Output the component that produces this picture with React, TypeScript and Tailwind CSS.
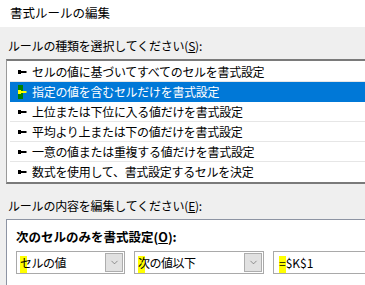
import { ChevronDown } from 'lucide-react';

const FONT = '"Noto Sans CJK JP", "Noto Sans", sans-serif';

const RULES = [
  'セルの値に基づいてすべてのセルを書式設定',
  '指定の値を含むセルだけを書式設定',
  '上位または下位に入る値だけを書式設定',
  '平均より上または下の値だけを書式設定',
  '一意の値または重複する値だけを書式設定',
  '数式を使用して、書式設定するセルを決定',
];

function RuleArrow({ selected }: { selected: boolean }) {
  const c = selected ? '#ffff00' : '#000000';
  return (
    <svg width="12" height="14" viewBox="0 0 12 14" className="flex-none">
      {selected && <rect x="2" y="0" width="5" height="14" fill="#008000" />}
      <rect x="2" y="5" width="3" height="4" fill={c} />
      <rect x="5" y="6" width="5" height="2" fill={c} />
      <rect x="10" y="6.5" width="1" height="1" fill={c} />
    </svg>
  );
}

function Marked({ first, rest }: { first: string; rest: string }) {
  return (
    <span className="whitespace-nowrap">
      <span className="relative inline-block">
        <span className="absolute left-0 top-[3px] w-[7px] h-[17px] bg-[#ffff00]" />
        <span className="relative">{first}</span>
      </span>
      {rest}
    </span>
  );
}

function Combo({ width, first, rest }: { width: string; first: string; rest: string }) {
  return (
    <div className={`${width} flex-none h-[23px] flex items-center border border-[#a9a9a9] bg-white pl-[3px] pr-[1px]`}>
      <div className="flex-1 text-[12px] tracking-[-0.5px] leading-[20px]">
        <Marked first={first} rest={rest} />
      </div>
      <div className="w-[18px] h-[19px] flex items-center justify-center bg-[#e1e1e1] border border-[#adadad]">
        <ChevronDown size={11} strokeWidth={1.3} color="#555555" />
      </div>
    </div>
  );
}

export default function App() {
  return (
    <div
      className="w-[365px] h-[285px] overflow-hidden bg-[#efefef] text-black flex flex-col"
      style={{ fontFamily: FONT }}
    >
      <div className="h-[27px] flex-none bg-white flex items-center pl-[10px] text-[12.5px] tracking-[0px]">
        書式ルールの編集
      </div>

      <div className="pl-[8px] pt-[12px] h-[32px] flex-none text-[12px] tracking-[-0.2px] leading-[14px]">
        ルールの種類を選択してください(<span className="underline">S</span>):
      </div>

      <div className="ml-[6px] w-[420px] flex-none bg-white border-y-2 border-l border-t-[#7a7a7a] border-b-[#7a7a7a] border-l-[#9a9a9a] pl-[3px] pt-[1px]">
        {RULES.map((r, i) => {
          const sel = i === 1;
          return (
            <div
              key={r}
              className={`h-[20px] flex items-center gap-[4px] pl-[6px] text-[12px] tracking-[-0.3px] whitespace-nowrap ${
                sel ? 'bg-[#0078d7] text-white' : i < 5 ? 'border-b border-[#e6e6e6]' : ''
              }`}
            >
              <RuleArrow selected={sel} />
              <span>{r}</span>
            </div>
          );
        })}
      </div>

      <div className="pl-[8px] pt-[15px] h-[35px] flex-none text-[12px] tracking-[-0.2px] leading-[14px]">
        ルールの内容を編集してください(<span className="underline">E</span>):
      </div>

      <div className="ml-[6px] w-[420px] flex-1 bg-white border-t border-l border-[#8d94a3] pl-[9px] pt-[9px]">
        <div className="text-[12.5px] font-bold tracking-[0px] leading-[16px]">
          次のセルのみを書式設定(<span className="underline">O</span>):
        </div>
        <div className="mt-[6px] flex gap-[9px]">
          <Combo width="w-[109px]" first="セ" rest="ルの値" />
          <Combo width="w-[130px]" first="次" rest="の値以下" />
          <div className="w-[160px] flex-none h-[23px] flex items-center border border-[#a9a9a9] bg-white pl-[5px] text-[12px] leading-[20px]">
            <Marked first="=" rest="$K$1" />
          </div>
        </div>
      </div>
    </div>
  );
}
